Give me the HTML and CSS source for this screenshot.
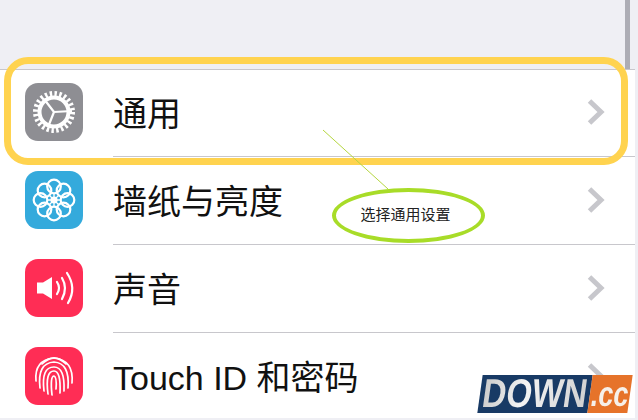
FILE: index.html
```html
<!DOCTYPE html>
<html lang="zh-CN">
<head>
  <meta charset="UTF-8">
  <meta name="viewport" content="width=device-width, initial-scale=1.0">
  <title>通用</title>
  <link rel="stylesheet" href="styles.css">
</head>
<body>
  <div class="page">
    <div class="scroll-mark"></div>
    <ul class="list">
      <li class="row">
        <span class="icon icon-gray">
          <svg viewBox="0 0 58 58" width="58" height="58">
            <circle cx="29" cy="29" r="18.5" fill="none" stroke="#fff" stroke-width="5" stroke-dasharray="2.42 2.42"/>
            <circle cx="29" cy="29" r="14.5" fill="none" stroke="#fff" stroke-width="4"/>
            <path d="M29 29L47 28M29 29L19 16M29 29L23 44" stroke="#fff" stroke-width="2.2" fill="none"/>
          </svg>
        </span>
        <span class="label">通用</span>
        <svg class="chevron" viewBox="0 0 18 26" width="18" height="26"><path d="M2.5 2L14 13L2.5 24" fill="none" stroke="#c7c7cc" stroke-width="5"/></svg>
      </li>
      <li class="row">
        <span class="icon icon-blue">
          <svg viewBox="0 0 58 58" width="58" height="58">
            <g fill="none" stroke="#fff" stroke-width="2.2">
              <circle cx="29" cy="15.5" r="6.8"/>
              <circle cx="38.5" cy="19.5" r="6.8"/>
              <circle cx="42.5" cy="29" r="6.8"/>
              <circle cx="38.5" cy="38.5" r="6.8"/>
              <circle cx="29" cy="42.5" r="6.8"/>
              <circle cx="19.5" cy="38.5" r="6.8"/>
              <circle cx="15.5" cy="29" r="6.8"/>
              <circle cx="19.5" cy="19.5" r="6.8"/>
              <path d="M29 29L29 22M29 29L36 29M29 29L29 36M29 29L22 29M29 29L34 24M29 29L34 34M29 29L24 34M29 29L24 24" stroke-width="1.3"/>
            </g>
            <circle cx="29" cy="29" r="3.6" fill="#fff"/>
          </svg>
        </span>
        <span class="label">墙纸与亮度</span>
        <svg class="chevron" viewBox="0 0 18 26" width="18" height="26"><path d="M2.5 2L14 13L2.5 24" fill="none" stroke="#c7c7cc" stroke-width="5"/></svg>
      </li>
      <li class="row">
        <span class="icon icon-red">
          <svg viewBox="0 0 58 58" width="58" height="58">
            <path d="M12 23.5H18L27 18V40L18 34.5H12Z" fill="#fff"/>
            <g fill="none" stroke="#fff" stroke-width="2.2" stroke-linecap="round">
              <path d="M32 23Q36 29 32 35"/>
              <path d="M37 19Q43 29 37 40"/>
              <path d="M42 14Q52 29 43 44"/>
            </g>
          </svg>
        </span>
        <span class="label">声音</span>
        <svg class="chevron" viewBox="0 0 18 26" width="18" height="26"><path d="M2.5 2L14 13L2.5 24" fill="none" stroke="#c7c7cc" stroke-width="5"/></svg>
      </li>
      <li class="row">
        <span class="icon icon-red">
          <svg viewBox="0 0 58 58" width="58" height="58">
            <g fill="none" stroke="#fff" stroke-width="1.7" stroke-linecap="round">
              <path d="M17 17Q29 5 41 17"/>
              <path d="M11 34Q9 13 29 11Q49 13 47 36"/>
              <path d="M15 41Q12 16 29 15Q45 16 43 41"/>
              <path d="M19 44Q16 20 29 20Q40 20 39 44"/>
              <path d="M23 47Q20 24 29 24Q36 24 35 46"/>
              <path d="M27 48Q25 29 29 29Q32 30 31 42"/>
            </g>
          </svg>
        </span>
        <span class="label">Touch ID 和密码</span>
        <svg class="chevron" viewBox="0 0 18 26" width="18" height="26"><path d="M2.5 2L14 13L2.5 24" fill="none" stroke="#c7c7cc" stroke-width="5"/></svg>
      </li>
    </ul>

    <!-- annotations on top of the screenshot -->
    <div class="highlight"></div>
    <svg class="pointer" viewBox="0 0 70 64" width="70" height="64"><path d="M1 1L66 60" stroke="#b5d63f" stroke-width="1" fill="none"/></svg>
    <div class="note">选择通用设置</div>

    <div class="badge">
      <span class="badge-main"><b>DOWN</b></span><span class="badge-end"><b>.cc</b></span>
    </div>
  </div>
</body>
</html>
```

FILE: styles.css
```css
* {
  box-sizing: border-box;
}

body {
  margin: 0;
  background-color: #efeff4;
  font-family: "Liberation Sans", "Noto Sans CJK SC", Arial, sans-serif;
  color: #111;
}

.page {
  position: relative;
  width: 638px;
  height: 420px;
  overflow: hidden;
  padding-top: 69px;
}

.scroll-mark {
  position: absolute;
  left: 625px;
  top: 0;
  width: 5px;
  height: 70px;
  background-color: #adadb5;
}

.list {
  list-style: none;
  margin: 0;
  padding: 0;
  width: 635px;
  background-color: #fff;
}

.row {
  display: flex;
  align-items: flex-start;
  height: 88px;
  padding: 14px 0 0 25px;
  position: relative;
}

.row:first-child {
  box-shadow: inset 0 1px #c8c7cc;
}

.row:last-child {
  height: 85px;
}

.row:not(:last-child)::after {
  content: "";
  position: absolute;
  left: 113px;
  right: 0;
  bottom: 0;
  height: 1px;
  background-color: #c8c7cc;
}

.icon {
  width: 58px;
  height: 58px;
  border-radius: 13px;
  flex: none;
}

.icon svg {
  display: block;
}

.icon-gray {
  background-color: #8e8e93;
}

.icon-blue {
  background-color: #34aadc;
}

.icon-red {
  background-color: #ff2d55;
}

.label {
  margin: 2px 0 0 30px;
  font-size: 34px;
  line-height: 58px;
  white-space: nowrap;
}

.chevron {
  margin-left: auto;
  margin-right: 30px;
  margin-top: 16px;
}

.highlight {
  position: absolute;
  left: 4px;
  top: 57px;
  width: 624px;
  height: 108px;
  border: 7px solid #ffd34f;
  border-radius: 24px;
}

.pointer {
  position: absolute;
  left: 322px;
  top: 129px;
}

.note {
  position: absolute;
  left: 332px;
  top: 188px;
  width: 153px;
  height: 55px;
  display: flex;
  align-items: center;
  justify-content: center;
  padding: 0 6px 5px 0;
  border: 4px solid #a8dc28;
  border-radius: 50%;
  font-size: 15px;
  color: #222;
}

.badge {
  position: absolute;
  left: 480px;
  top: 375px;
  display: flex;
  height: 38px;
  transform: skewX(-8deg);
}

.badge-main,
.badge-end {
  display: flex;
  align-items: center;
  justify-content: center;
}

.badge-main {
  width: 110px;
  background-color: #183a65;
  font-size: 33px;
  line-height: 38px;
}

.badge-main b {
  transform: scaleY(1.22);
  background: linear-gradient(100deg, #c9c9c9, #f4f4f4 40%, #cfcfcf);
  -webkit-background-clip: text;
  background-clip: text;
  color: transparent;
}

.badge-end {
  width: 40px;
  background-color: #e6732a;
  color: #f6f0ea;
  font-size: 27px;
  line-height: 38px;
}

.badge-end b {
  transform: scaleY(1.3);
}
```
